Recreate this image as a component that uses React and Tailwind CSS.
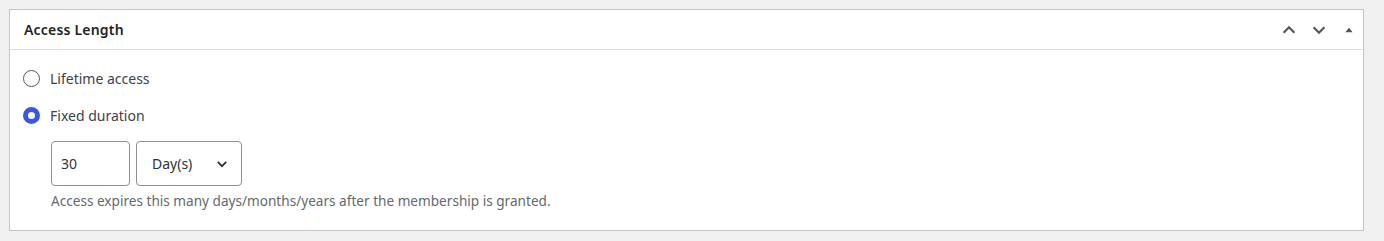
import React, { useState } from 'react';

const font = { fontFamily: '"Segoe UI", "Noto Sans", "Liberation Sans", sans-serif' };

const App = () => {
    const [mode, setMode] = useState('fixed');

    const radio = (value, label) => (
        <label className="flex items-center gap-[10px] h-[20px] cursor-pointer text-[14px] text-[#3c434a]">
            <span
                onClick={() => setMode(value)}
                className={
                    mode === value
                        ? 'w-[17px] h-[17px] rounded-full border-[5px] border-[#3858e9] bg-white'
                        : 'w-[17px] h-[17px] rounded-full border border-[#50575e] bg-white'
                }
            />
            {label}
        </label>
    );

    return (
        <div className="w-[1384px] h-[241px] bg-[#f0f0f1] pt-[9px] pl-[9px] pr-[20px]" style={font}>
            <div className="bg-white border border-[#c3c4c7] h-[222px]">
                <div className="flex items-center justify-between h-[40px] border-b border-[#dcdcde] pl-[14px] pr-[5px]">
                    <h2 className="text-[14px] font-semibold text-[#1d2327] tracking-[0.2px]">Access Length</h2>
                    <div className="flex items-center gap-[12px] text-[#50575e]">
                        <svg width="18" height="18" viewBox="0 0 20 20" fill="none" stroke="currentColor" strokeWidth="2.4">
                            <path d="M4 13l6-6 6 6" />
                        </svg>
                        <svg width="18" height="18" viewBox="0 0 20 20" fill="none" stroke="currentColor" strokeWidth="2.4">
                            <path d="M4 7l6 6 6-6" />
                        </svg>
                        <svg width="18" height="18" viewBox="0 0 20 20" fill="currentColor">
                            <path d="M6 12.5l4-5 4 5z" />
                        </svg>
                    </div>
                </div>
                <div className="pl-[13px] pt-[18px]">
                    <div className="flex flex-col gap-[17px]">
                        {radio('lifetime', 'Lifetime access')}
                        {radio('fixed', 'Fixed duration')}
                    </div>
                    <div className="pl-[28px] pt-[16px]">
                        <div className="flex gap-[6px]">
                            <input
                                defaultValue="30"
                                className="w-[79px] h-[45px] border border-[#8c8f94] rounded-[4px] px-[9px] text-[14px] text-[#2c3338] outline-none"
                            />
                            <div className="w-[106px] h-[45px] border border-[#8c8f94] rounded-[4px] pl-[15px] pr-[12px] flex items-center justify-between text-[14px] text-[#2c3338]">
                                <span>Day(s)</span>
                                <svg width="14" height="14" viewBox="0 0 20 20" fill="none" stroke="currentColor" strokeWidth="2.6">
                                    <path d="M4 7l6 6 6-6" />
                                </svg>
                            </div>
                        </div>
                        <p className="mt-[5px] text-[13.6px] text-[#646970]">
                            Access expires this many days/months/years after the membership is granted.
                        </p>
                    </div>
                </div>
            </div>
        </div>
    );
};

export default App;
